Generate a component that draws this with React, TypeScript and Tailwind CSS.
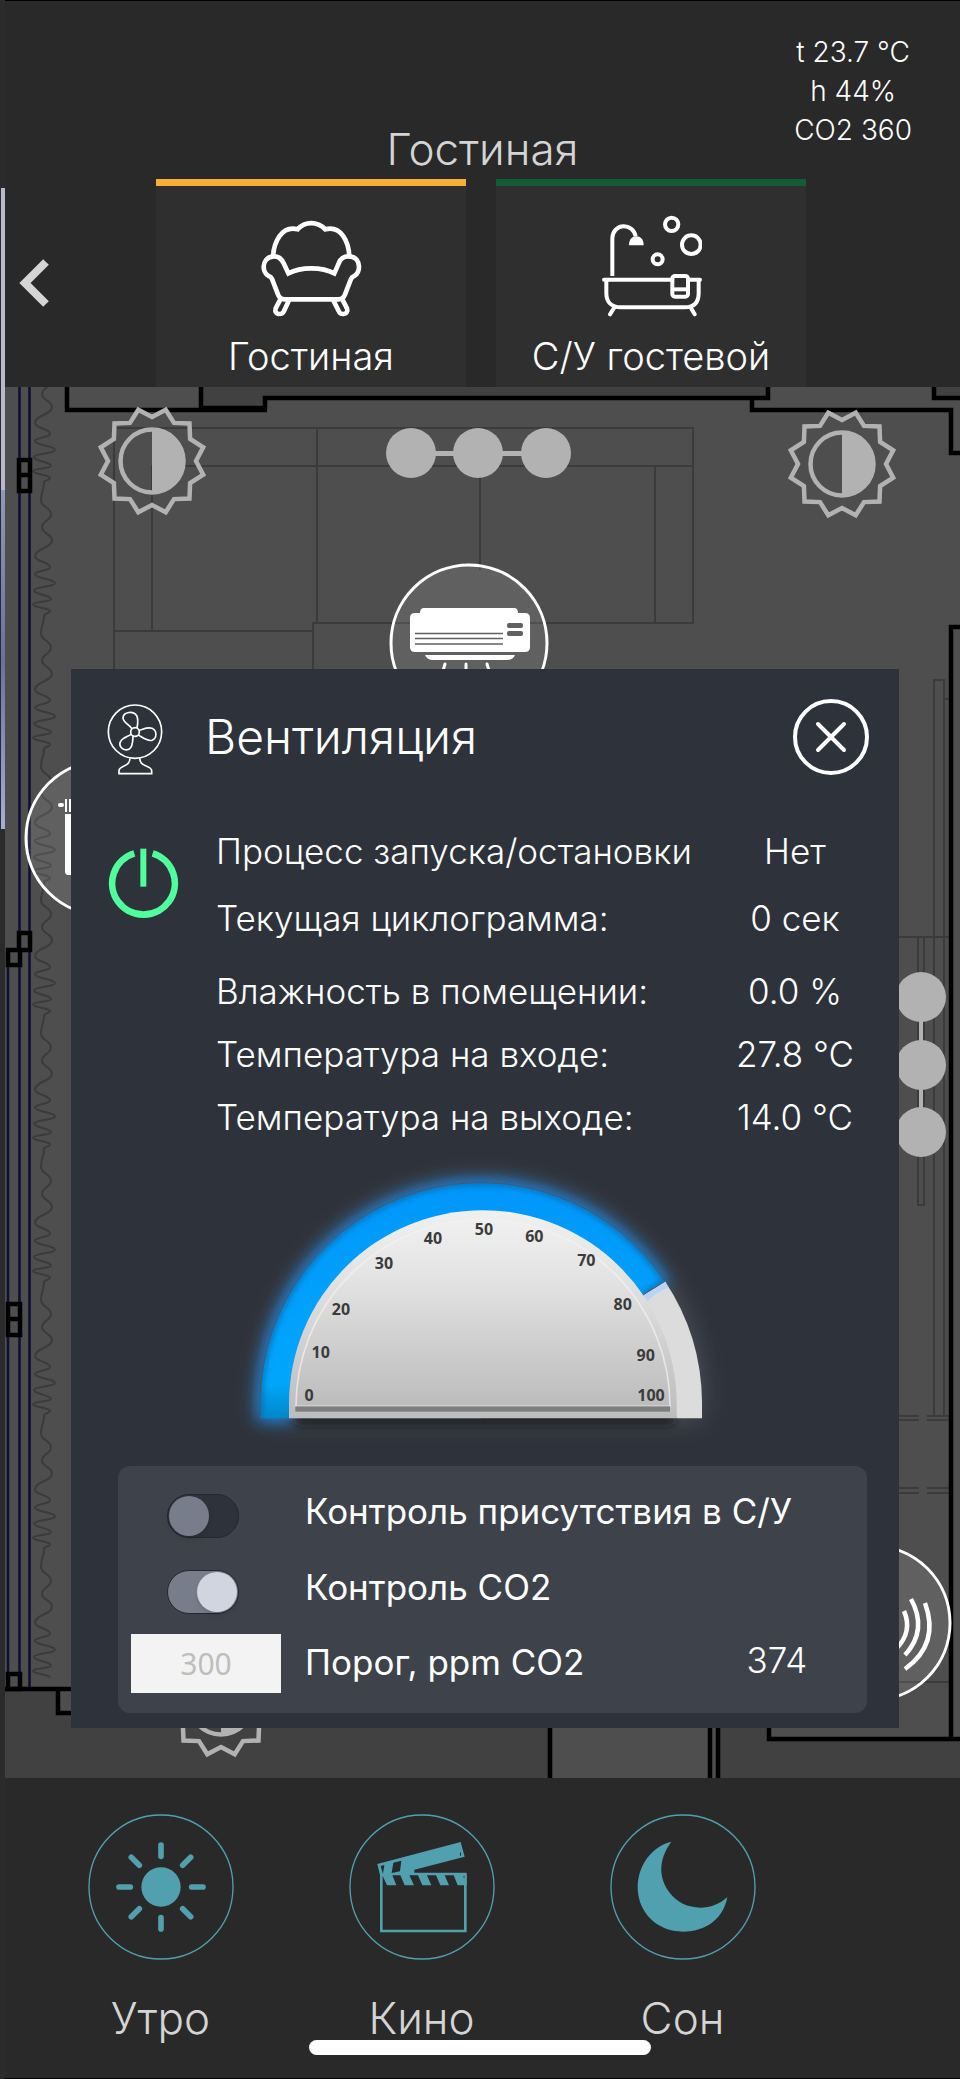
import type { ReactNode } from "react";

const READINGS = [
  [
    { label: "Процесс запуска/остановки", value: "Нет" },
    { label: "Текущая циклограмма:", value: "0 сек" },
  ],
  [
    { label: "Влажность в помещении:", value: "0.0 %" },
    { label: "Температура на входе:", value: "27.8 °C" },
    { label: "Температура на выходе:", value: "14.0 °C" },
  ],
];

const TICKS = [
  [207, 712, "0"],
  [242, 583, "10"],
  [303, 455, "20"],
  [432, 317, "30"],
  [579, 240, "40"],
  [732, 214, "50"],
  [883, 236, "60"],
  [1039, 308, "70"],
  [1148, 438, "80"],
  [1217, 592, "90"],
  [1233, 712, "100"],
] as const;

/* One fold of the curtain: x, y offset from its start */
const FOLD = [
  [44, 0], [41, 18], [51, 32], [42, 45], [52, 58], [35, 74], [50, 85],
  [35, 92], [55, 101], [34, 108], [51, 117], [33, 122], [50, 129],
];

function curtainPath() {
  const pts: number[][] = [];
  for (let i = 0; i < 10; i++) {
    FOLD.forEach(([x, y]) => pts.push([x, 349 + i * 133.3 + y]));
  }
  return pts
    .map(([x, y], i) => {
      if (i === 0) return `M${x} ${y}`;
      const [px, py] = pts[i - 1];
      const mid = (py + y) / 2;
      return `C${px} ${mid} ${x} ${mid} ${x} ${y}`;
    })
    .join("");
}

function Dimmer({ cx, cy }: { cx: number; cy: number }) {
  const points = Array.from({ length: 24 }, (_, i) => {
    const r = i % 2 ? 53 : 44;
    const a = (i * 15 * Math.PI) / 180;
    return `${cx + r * Math.sin(a)},${cy - r * Math.cos(a)}`;
  }).join(" ");
  return (
    <g stroke="#b2b2b2" strokeWidth="4.500" fill="none">
      <polygon points={points} />
      <circle cx={cx} cy={cy} r="31.5" />
      <path d={`M${cx} ${cy - 31}a31 31 0 0 1 0 62z`} fill="#b2b2b2" stroke="none" />
    </g>
  );
}

function FloorPlan() {
  return (
    <svg
      className="absolute inset-0 h-full w-full"
      viewBox="5 387 955 1391"
      preserveAspectRatio="xMinYMin slice"
      aria-hidden="true"
    >
      <rect x="5" y="387" width="955" height="1391" fill="#4e4e4e" />
      <g fill="#414141">
        <path d="M201 387H768V397H264V408H201z" />
        <path d="M934 387H960V398H934z" />
        <path d="M5 1689H57V1713H550V1778H5z" />
        <path d="M718 1720H769V1739H960V1778H718z" />
      </g>

      {/* Мебель */}
      <g stroke="#3b3b3b" strokeWidth="2" fill="none">
        <path d="M114 669V428H693V623H313V669M114 631H313M152 631V466H693M317 428V623M655 466V623M480 466V570" />
        <path d="M899 937H951M934 1417V680H944V1417M944 699H951M918 937V1205H924V937" />
        <path d="M899 1416H919M927 1416H951M899 1420H919M927 1420H951M899 1488H919M927 1488H951M899 1493H919M927 1493H951M899 1682H951" />
        <path d={curtainPath()} />
      </g>

      {/* Окна */}
      <path d="M19.5 387V1688M29.5 387V1688M8 950V1688" stroke="#0e0e36" strokeWidth="2.5" />

      {/* Стены */}
      <g stroke="#000" strokeWidth="4.500" fill="none">
        <path d="M67 387V410H267M201 387V408H265V398H768V387" />
        <path d="M752 398V410H951V453H960M934 387V398H960" />
        <path d="M960 627H951V1739M769 1720V1739H960" />
        <path d="M5 1689H71M58 1689V1713H71" />
        <path d="M550 1720V1778M710 1720V1778M718 1720V1778" />
        <path d="M19 460H30V491H19zM19 475H30M19 933H30V950H19zM8 950H20V965H8zM8 1304H20V1335H8zM8 1319H20M8 1674H20V1689H8z" />
      </g>

      {/* Светильники */}
      <Dimmer cx={152} cy={461} />
      <Dimmer cx={842} cy={464} />
      <Dimmer cx={221} cy={1703} />
      <g fill="#b2b2b2">
        <path d="M411 451H546V456H411zM919 997H923V1132H919z" />
        <circle cx="411" cy="453" r="25" />
        <circle cx="478" cy="453" r="25" />
        <circle cx="546" cy="453" r="25" />
        <circle cx="921" cy="997" r="25" />
        <circle cx="921" cy="1065" r="25" />
        <circle cx="921" cy="1132" r="25" />
      </g>

      {/* Климат и датчики */}
      <g fill="#fff" fillOpacity="0.1" stroke="#fff" strokeWidth="3">
        <circle cx="469" cy="643" r="78" />
        <circle cx="103" cy="838" r="77" />
        <circle cx="873" cy="1623" r="77" />
      </g>
      <g fill="#fff">
        <path d="M424 608H514Q518 608 518 613H525Q530 613 530 618V647Q530 652 525 652H415Q410 652 410 647V618Q410 613 415 613H420Q420 608 424 608z" />
        <path d="M425 655H515Q513 660 507 660H433Q427 660 425 655z" />
        <path d="M415 633.500H503M415 638.500H503M415 644H503" stroke="#616161" strokeWidth="1.5" />
        <rect x="507" y="623" width="16" height="5" rx="2" fill="#616161" />
        <rect x="507" y="631" width="16" height="5" rx="2" fill="#616161" />
        <path d="M445 664L442 674M466 664V674M487 664L490 674" stroke="#fff" strokeWidth="3" strokeLinecap="round" />
        <rect x="58" y="803" width="6" height="4" rx="2" />
        <path d="M65 799H67V812H65zM69 799H71V812H69zM65 814H80V875H68Q65 875 65 871z" />
      </g>
      <g fill="none" stroke="#fff" strokeWidth="4.500">
        <path d="M925 1603Q940 1644 905 1669" />
        <path d="M911 1599Q928 1630 905 1655" />
        <path d="M904 1611Q913 1632 896 1649" />
      </g>
    </svg>
  );
}

function ArmchairIcon() {
  return (
    <svg width="102" height="98" viewBox="60 60 306 294" fill="none" stroke="#fff" strokeWidth="14" aria-hidden="true">
      <path d="M99 172C102 130 125 78 173 91C195 66 232 66 256 91C304 78 326 130 328 172" />
      <path d="M145 223C183 203 245 203 283 223L296 193Q304 172 325 172C350 172 357 190 357 203Q357 222 343 231Q336 233 333 240L316 284Q310 301 296 301H133Q119 301 113 284L96 240Q93 233 86 231Q71 222 71 203C71 190 80 172 102 172Q122 172 131 193z" />
      <path d="M121 301L107 328Q103 342 116 345Q128 346 132 336L147 304M307 301L321 328Q325 342 311 345Q300 346 296 336L280 304" />
    </svg>
  );
}

function BathIcon() {
  return (
    <svg width="102" height="102" viewBox="1083 46 306 306" fill="none" stroke="#fff" strokeWidth="12" aria-hidden="true">
      <path d="M1120 229V115C1122 70 1182 68 1190 110" />
      <path d="M1170 137C1170 118 1180 110 1192 110S1214 118 1214 137z" fill="#fff" stroke="none" />
      <circle cx="1298" cy="74" r="20" />
      <circle cx="1357" cy="135" r="28" />
      <circle cx="1256" cy="179" r="15" />
      <path d="M1095 240H1300M1348 240H1383M1127 322L1113 344M1354 322L1367 344" strokeLinecap="round" />
      <path d="M1102 240V280C1102 308 1118 323 1145 323H1338C1365 323 1379 308 1379 280V240" />
      <rect x="1300" y="229" width="47" height="62" rx="8" />
      <path d="M1300 269H1347" />
    </svg>
  );
}

function FanIcon() {
  return (
    <svg width="56" height="71" viewBox="319 135 168 213" fill="none" stroke="#fff" strokeWidth="5" aria-hidden="true">
      <circle cx="403" cy="218" r="80" />
      <circle cx="403" cy="219" r="13" />
      <path d="M394 209C385 196 366 190 367 176C369 158 398 155 408 170C414 182 411 196 409 207" />
      <path d="M415 214C428 211 440 203 454 208C470 215 469 238 454 244C440 248 425 235 413 228" />
      <path d="M397 231C396 243 398 261 386 270C371 278 355 265 358 251C362 237 380 234 391 226" />
      <path d="M388 298C388 325 355 318 355 335V344H453V335C453 318 417 325 417 298" />
    </svg>
  );
}

function Gauge() {
  return (
    <svg width="480" height="270" viewBox="0 0 1440 810" className="block overflow-visible" role="img" aria-label="Мощность 81%">
      <defs>
        <linearGradient id="dial" x1="0" y1="0" x2="0" y2="1">
          <stop offset="0" stopColor="#f0f0f0" />
          <stop offset="0.300" stopColor="#e4e4e4" />
          <stop offset="1" stopColor="#bcbcbc" />
        </linearGradient>
        <linearGradient id="level" x1="0" y1="0" x2="0" y2="1">
          <stop offset="0" stopColor="#0097fb" />
          <stop offset="0.850" stopColor="#00a7fb" />
          <stop offset="1" stopColor="#0086ca" />
        </linearGradient>
        <filter id="glow" x="-20%" y="-20%" width="140%" height="140%">
          <feGaussianBlur stdDeviation="24" />
        </filter>
        <filter id="halo" x="-30%" y="-30%" width="160%" height="160%">
          <feGaussianBlur stdDeviation="40" />
        </filter>
        <filter id="shade" x="-20%" y="-200%" width="140%" height="500%">
          <feGaussianBlur stdDeviation="12" />
        </filter>
        <filter id="rim" x="-10%" y="-10%" width="120%" height="120%">
          <feGaussianBlur stdDeviation="10" />
        </filter>
        <clipPath id="band">
          <path d="M60 781V732A663 664 0 0 1 1275 370L1210 410L723 781z" />
        </clipPath>
      </defs>
      <path d="M60 781V732A663 664 0 0 1 1386 732V781z" fill="#85858c" fillOpacity="0.400" filter="url(#halo)" />
      <path d="M60 781V732A663 664 0 0 1 1275 370L1210 410L1190 380A581 581 0 0 0 147 738V781z" fill="#1484e6" stroke="#1484e6" strokeWidth="16" filter="url(#glow)" />
      <rect x="170" y="730" width="1130" height="70" fill="#15171c" fillOpacity="0.800" filter="url(#shade)" />
      <path d="M1275 370A663 664 0 0 1 1386 732V781H1310L1210 410z" fill="#dcdcdc" />
      <path d="M1275 370L1210 410L1222 430Q1250 400 1285 390z" fill="#b9d2f5" />
      <path d="M60 781V732A663 664 0 0 1 1275 370L1210 410L723 781z" fill="url(#level)" />
      <g clipPath="url(#band)">
        <path d="M60 781V732A663 664 0 0 1 1275 370L1210 410" fill="none" stroke="#0069b0" strokeWidth="14" filter="url(#rim)" />
      </g>
      <path d="M60 781V732A663 664 0 0 1 1275 370L1210 410" fill="none" stroke="#4b5563" strokeWidth="3" />
      <path d="M147 781V738A581 581 0 0 1 1310 738V781z" fill="url(#dial)" />
      <path d="M168 745A561 561 0 0 1 1290 745z" fill="url(#dial)" stroke="#f2f2f2" strokeOpacity="0.700" strokeWidth="5" />
      <rect x="166" y="745" width="1124" height="16" fill="#7e7e7e" />
      {TICKS.map(([x, y, t]) => (
        <text
          key={t}
          x={x}
          y={y + 17}
          textAnchor="middle"
          className="fill-[#3b3b3b] font-['Open_Sans',sans-serif] text-[48px] font-bold"
        >
          {t}
        </text>
      ))}
    </svg>
  );
}

function RoomTab({ label, accent, children }: { label: string; accent: string; children: ReactNode }) {
  return (
    <button className={`flex h-[208px] flex-col items-center justify-end border-t-[7px] bg-[#2f2f2f] ${accent}`}>
      {children}
      <span className="mt-3.5 pb-1.5 text-[38px] leading-[50px]">{label}</span>
    </button>
  );
}

function Scene({ label, children }: { label: string; children: ReactNode }) {
  return (
    <button className="flex w-[261px] flex-col items-center text-[#d4d4d4]">
      <svg width="146" height="146" viewBox="54 40 438 438" fill="none" stroke="#50a0b0" aria-hidden="true">
        <circle cx="273" cy="259" r="216" strokeWidth="4" />
        {children}
      </svg>
      <span className="mt-[30px] text-[44px] leading-[56px]">{label}</span>
    </button>
  );
}

function Toggle({ id, defaultChecked }: { id: string; defaultChecked?: boolean }) {
  return (
    <input
      id={id}
      type="checkbox"
      role="switch"
      defaultChecked={defaultChecked}
      className="relative ml-9 h-11 w-[72px] appearance-none rounded-full border border-[#24272e] bg-[#2e323a] before:absolute before:top-px before:left-px before:size-10 before:rounded-full before:bg-[#777d8b] before:shadow-md checked:bg-[#777d8b] checked:before:left-[29px] checked:before:bg-[#d0d5e0]"
    />
  );
}

function VentilationDialog() {
  return (
    <div role="dialog" aria-label="Вентиляция" className="relative bg-[#2e323b] pb-[15px]">
      <div className="flex h-[136px] items-center pr-[30px] pl-9">
        <div className="pt-1">
          <FanIcon />
        </div>
        <h2 className="ml-[42px] flex-1 text-[48px] leading-[60px]">Вентиляция</h2>
        <button aria-label="Закрыть" className="size-[76px]">
          <svg viewBox="0 0 76 76" fill="none" stroke="#fff" strokeWidth="4" aria-hidden="true">
            <circle cx="38" cy="38" r="36" />
            <path d="M25 25L51 51M51 25L25 51" strokeLinecap="round" />
          </svg>
        </button>
      </div>

      <div className="flex pr-4 pl-[37px]">
        <button aria-label="Питание" className="mt-[43px] size-[71px]">
          <svg viewBox="323 565 213 213" fill="none" stroke="#50ff9b" aria-hidden="true">
            <path d="M402 581A94 94 0 1 0 457 581" strokeWidth="20" />
            <path d="M429 567V681" strokeWidth="18" />
          </svg>
        </button>
        <div className="ml-[37px] flex-1 pt-[13px] text-[35px]">
          {READINGS.map((group, i) => (
            <dl key={i} className={i === 0 ? "leading-[67px]" : "mt-2 leading-[63px]"}>
              {group.map((r) => (
                <div key={r.label} className="flex">
                  <dt className="flex-1 whitespace-nowrap">{r.label}</dt>
                  <dd className="w-[176px] text-center">{r.value}</dd>
                </div>
              ))}
            </dl>
          ))}
        </div>
      </div>

      <div className="mt-[9px] flex justify-center pr-2.5">
        <Gauge />
      </div>

      <div className="mt-[38px] mr-8 ml-[47px] grid grid-cols-[150px_1fr_180px] items-center gap-x-6 rounded-xl bg-[#3e424a] pt-3 pb-5 pl-[13px] text-[35px] leading-[58px]">
        <Toggle id="presence" />
        <label htmlFor="presence" className="col-span-2 pt-1 pb-3.5 font-normal">Контроль присутствия в С/У</label>
        <Toggle id="co2" defaultChecked />
        <label htmlFor="co2" className="col-span-2 pt-1 pb-3.5 font-normal">Контроль CO2</label>
        <input
          id="limit"
          defaultValue="300"
          inputMode="numeric"
          className="mt-1 h-[59px] w-full bg-[#f3f3f3] text-center font-['Noto_Sans',sans-serif] text-[30px] font-normal text-[#bebebe]"
        />
        <label htmlFor="limit" className="font-normal">Порог, ppm CO2</label>
        <output className="pb-1 text-center">374</output>
      </div>
    </div>
  );
}

export default function App() {
  return (
    <div className="relative flex min-h-screen bg-[#2b2b2b] font-['Inter',sans-serif] font-light text-white">
      <div className="w-[5px] shrink-0 pt-[188px] pl-px">
        <div className="h-[302px] bg-[#b9b9cb]" />
        <div className="h-[339px] bg-linear-to-b from-[#8d9abd] via-[#64749f] to-[#a3b1d8]" />
      </div>

      <div className="flex min-w-0 flex-1 flex-col border-y border-black bg-[#292929]">
        <header>
          <div className="grid h-[178px] grid-cols-[1fr_auto_1fr]">
            <h1 className="col-start-2 self-end pb-0.5 text-[44px] leading-[56px] text-[#d4d4d4]">Гостиная</h1>
            <div className="mr-12 justify-self-end pt-8 text-center text-[28px] leading-[39px]">
              <p>t 23.7 °C</p>
              <p>h 44%</p>
              <p>CO2 360</p>
            </div>
          </div>
          <div className="flex">
            <button aria-label="Назад" className="w-[151px] shrink-0 pl-3.5">
              <svg width="30" height="48" viewBox="0 0 30 48" fill="none" stroke="#d5d5d5" strokeWidth="8" aria-hidden="true">
                <path d="M27 3L6 24L27 45" />
              </svg>
            </button>
            <nav className="mr-[154px] grid flex-1 grid-cols-2 gap-[30px]">
              <RoomTab label="Гостиная" accent="border-[#fbae37]">
                <ArmchairIcon />
              </RoomTab>
              <RoomTab label="С/У гостевой" accent="border-[#145c37]">
                <BathIcon />
              </RoomTab>
            </nav>
          </div>
        </header>

        <main className="relative overflow-hidden pt-[282px] pr-[61px] pb-[50px] pl-[66px]">
          <FloorPlan />
          <VentilationDialog />
        </main>

        <footer className="flex flex-1 pt-9 pl-[25px]">
          <Scene label="Утро">
            <circle cx="273" cy="259" r="59" fill="#50a0b0" stroke="none" />
            <g strokeWidth="17" strokeLinecap="round">
              {[0, 45, 90, 135, 180, 225, 270, 315].map((a) => (
                <path key={a} d="M273 167V133" transform={`rotate(${a} 273 259)`} />
              ))}
            </g>
          </Scene>
          <Scene label="Кино">
            <path d="M151 221V391H403V221" strokeWidth="8" />
            <path d="M139 190L389 124L401 168L250 207V216H407V254H380L368 224H341L354 254H328L315 224H288L301 254H274L261 224H235L249 254H221L208 224H184L196 254H168L155 226L147 224z" fill="#50a0b0" stroke="none" />
            <path d="M149 196L160 193L156 220zM187 186L211 180L207 212L182 217zM387 157L390 154V165L387 165zM397 228L400 224V234z" fill="#292929" stroke="none" />
          </Scene>
          <Scene label="Сон">
            <path d="M238 123C198 178 200 230 232 275C270 329 355 338 406 289C396 350 345 393 273 393C195 393 137 335 137 260C137 195 180 136 238 123z" fill="#50a0b0" stroke="none" />
          </Scene>
        </footer>
      </div>

      <div className="absolute bottom-6 left-1/2 h-[15px] w-[342px] -translate-x-1/2 rounded-full bg-white" />
    </div>
  );
}
